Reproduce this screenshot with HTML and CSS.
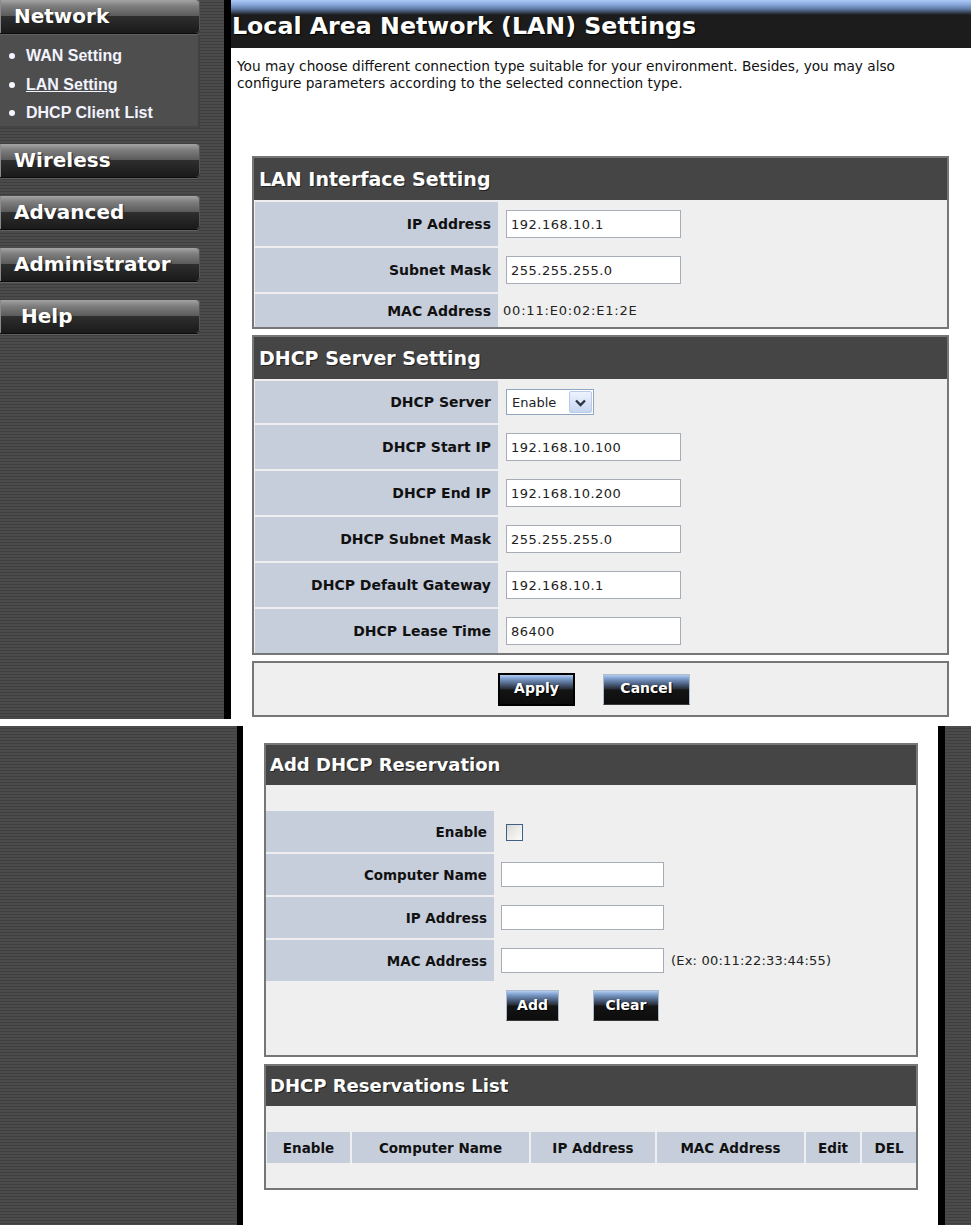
FILE: index.html
```html
<!DOCTYPE html>
<html lang="en">
<head>
<meta charset="utf-8">
<title>Local Area Network (LAN) Settings</title>
<link rel="stylesheet" href="styles.css">
</head>
<body>
<div class="shot shot-top">
  <aside class="side">
    <div class="nav-btn">Network</div>
    <ul class="submenu">
      <li><a>WAN Setting</a></li>
      <li><a class="current">LAN Setting</a></li>
      <li><a>DHCP Client List</a></li>
    </ul>
    <div class="nav-btn">Wireless</div>
    <div class="nav-btn">Advanced</div>
    <div class="nav-btn">Administrator</div>
    <div class="nav-btn help">Help</div>
  </aside>
  <div class="divider"></div>
  <main class="main">
    <header class="page-head"><h1>Local Area Network (LAN) Settings</h1></header>
    <p class="intro">You may choose different connection type suitable for your environment. Besides, you may also<br>configure parameters according to the selected connection type.</p>

    <section class="box box-lan">
      <h2 class="box-title">LAN Interface Setting</h2>
      <div class="form">
        <div class="lbl">IP Address</div>
        <div class="val"><input class="field" type="text" value="192.168.10.1"></div>
        <div class="lbl">Subnet Mask</div>
        <div class="val"><input class="field" type="text" value="255.255.255.0"></div>
        <div class="lbl">MAC Address</div>
        <div class="val"><span class="mac">00:11:E0:02:E1:2E</span></div>
      </div>
    </section>

    <section class="box box-dhcp">
      <h2 class="box-title">DHCP Server Setting</h2>
      <div class="form">
        <div class="lbl">DHCP Server</div>
        <div class="val val-select">
          <div class="select"><span class="select-text">Enable</span><span class="select-btn"><svg width="13" height="9" viewBox="0 0 13 9"><path d="M2 2.5 L6.5 7 L11 2.5" fill="none" stroke="#2b3548" stroke-width="2.4"/></svg></span></div>
        </div>
        <div class="lbl">DHCP Start IP</div>
        <div class="val"><input class="field" type="text" value="192.168.10.100"></div>
        <div class="lbl">DHCP End IP</div>
        <div class="val"><input class="field" type="text" value="192.168.10.200"></div>
        <div class="lbl">DHCP Subnet Mask</div>
        <div class="val"><input class="field" type="text" value="255.255.255.0"></div>
        <div class="lbl">DHCP Default Gateway</div>
        <div class="val"><input class="field" type="text" value="192.168.10.1"></div>
        <div class="lbl">DHCP Lease Time</div>
        <div class="val"><input class="field" type="text" value="86400"></div>
      </div>
    </section>

    <section class="box box-actions">
      <button class="btn btn-apply">Apply</button>
      <button class="btn btn-cancel">Cancel</button>
    </section>
  </main>
</div>

<div class="shot-gap"></div>

<div class="shot shot-bottom">
  <div class="stripes"></div>
  <div class="divider"></div>
  <main class="bmain">
    <section class="box2">
      <h2 class="box-title small">Add DHCP Reservation</h2>
      <div class="spacer"></div>
      <div class="form2">
        <div class="lbl lbl2">Enable</div>
        <div class="val2"><span class="check"></span></div>
        <div class="lbl lbl2">Computer Name</div>
        <div class="val2"><input class="field field2" type="text" value=""></div>
        <div class="lbl lbl2">IP Address</div>
        <div class="val2"><input class="field field2" type="text" value=""></div>
        <div class="lbl lbl2">MAC Address</div>
        <div class="val2"><input class="field field2" type="text" value=""><span class="hint">(Ex: 00:11:22:33:44:55)</span></div>
        <div class="btn-row">
          <button class="btn btn-add">Add</button>
          <button class="btn btn-clear">Clear</button>
        </div>
      </div>
    </section>

    <section class="box2 box-list">
      <h2 class="box-title small">DHCP Reservations List</h2>
      <div class="spacer"></div>
      <div class="list-head">
        <div class="th">Enable</div>
        <div class="th">Computer Name</div>
        <div class="th">IP Address</div>
        <div class="th">MAC Address</div>
        <div class="th">Edit</div>
        <div class="th">DEL</div>
      </div>
      <div class="list-foot"></div>
    </section>
  </main>
  <div class="divider"></div>
  <div class="stripes"></div>
</div>
</body>
</html>
```

FILE: styles.css
```css
html, body {
  margin: 0;
  padding: 0;
  background: #fff;
}
body {
  width: 971px;
  font-family: "DejaVu Sans", "Liberation Sans", sans-serif;
  color: #111;
}

/* ---------- top screenshot ---------- */
.shot-top {
  display: grid;
  grid-template-columns: 224px 7px 740px;
  height: 719px;
}
.side,
.stripes {
  background: repeating-linear-gradient(to bottom, #4b4b4b 0 2px, #3e3e3e 2px 3px);
}
.side {
  display: flex;
  flex-direction: column;
  align-items: flex-start;
}
.divider {
  background: #000;
}

.nav-btn {
  box-sizing: border-box;
  width: 200px;
  height: 33px;
  margin-bottom: 19px;
  padding-left: 14px;
  border-radius: 0 4px 4px 0;
  background: linear-gradient(to bottom, #a4a4a4 0, #7e7e7e 18%, #5c5c5c 47%, #2e2e2e 50%, #222 80%, #1a1a1a 100%);
  box-shadow: inset 1px 0 0 #8a8a8a, inset -1px 0 0 #555, 0 1px 0 #0c0c0c, 0 2px 0 #606060;
  color: #fff;
  font: bold 20px/33px "DejaVu Sans", sans-serif;
  text-shadow: 1px 1px 1px #222;
  white-space: nowrap;
}
.nav-btn.help {
  padding-left: 21px;
}

.submenu {
  box-sizing: border-box;
  width: 200px;
  height: 93px;
  margin: -17px 0 16px;
  padding: 7px 0 0 0;
  list-style: none;
  background: #4e4e4e;
  box-shadow: inset -2px 0 0 #404040, inset 0 -2px 0 #444;
}
.submenu li {
  position: relative;
  height: 28.5px;
  padding-left: 26px;
  font: bold 16px/28px "Liberation Sans", Arial, sans-serif;
}
.submenu li::before {
  content: "";
  position: absolute;
  left: 9px;
  top: 11px;
  width: 6px;
  height: 6px;
  border-radius: 50%;
  background: #f4f6ff;
}
.submenu a {
  color: #f2f4ff;
  text-decoration: none;
}
.submenu a.current {
  text-decoration: underline;
}

.main {
  background: #fff;
  display: flex;
  flex-direction: column;
}
.page-head {
  height: 48px;
  box-sizing: border-box;
  padding: 4px 0 0 1px;
  display: flex;
  align-items: center;
  background: linear-gradient(to bottom, #abcaf6 0, #8eaee0 4px, #5f7aa6 9px, #333b48 13px, #1c1c1c 15px, #1c1c1c 100%);
}
.page-head h1 {
  margin: 0;
  color: #fff;
  font: bold 23.7px/28px "DejaVu Sans", sans-serif;
  text-shadow: 1px 1px 1px #000;
}
.intro {
  margin: 10px 0 0;
  padding: 0 6px;
  font: 13.7px/17px "DejaVu Sans", sans-serif;
  color: #111;
}

.box {
  margin: 0 22px 0 21px;
  border: 2px solid #767676;
  background: #efefef;
}
.box-lan {
  margin-top: 64px;
}
.box-dhcp {
  margin-top: 6px;
}
.box-title {
  margin: 0;
  height: 42px;
  padding-left: 5px;
  background: #454545;
  color: #fff;
  font: bold 19px/42px "DejaVu Sans", sans-serif;
  text-shadow: 1px 1px 0 #222;
}
.form {
  display: grid;
  grid-template-columns: 243px 1fr;
  row-gap: 2px;
  padding: 2px 0 0 1px;
}
.lbl {
  display: flex;
  align-items: center;
  justify-content: flex-end;
  padding-right: 7px;
  background: #c7cedb;
  font: bold 14px "DejaVu Sans", sans-serif;
  color: #111;
  white-space: nowrap;
}
.val {
  display: flex;
  align-items: center;
  padding: 8px 0 8px 8px;
  min-height: 17px;
}
.mac {
  font: 13px/17px "DejaVu Sans", sans-serif;
  letter-spacing: 0.8px;
  color: #222;
  margin-left: -3px;
}
.field {
  box-sizing: border-box;
  width: 175px;
  height: 28px;
  margin: 0;
  padding: 0 4px;
  border: 1px solid #a6adb6;
  background: #fff;
  font: 13px "DejaVu Sans", sans-serif;
  letter-spacing: 0.5px;
  color: #222;
  outline: none;
}

.select {
  box-sizing: border-box;
  display: flex;
  align-items: center;
  justify-content: space-between;
  width: 88px;
  height: 26px;
  padding: 0 1px 0 5px;
  border: 1px solid #8fa6bf;
  background: #fff;
}
.select-text {
  font: 13px "DejaVu Sans", sans-serif;
  color: #222;
}
.select-btn {
  box-sizing: border-box;
  display: flex;
  align-items: center;
  justify-content: center;
  width: 23px;
  height: 22px;
  border: 1px solid #b9c9e6;
  border-radius: 2px;
  background: linear-gradient(to bottom, #eef3fd, #c7d6f2);
}

.box-actions {
  box-sizing: border-box;
  height: 56px;
  margin-top: 6px;
  display: flex;
  align-items: center;
  justify-content: center;
  gap: 28px;
  padding-right: 13px;
}

.btn {
  box-sizing: border-box;
  margin: 0;
  padding: 0 0 2px;
  color: #fff;
  font: bold 14px "DejaVu Sans", sans-serif;
  text-shadow: 1px 1px 0 #000;
  background: linear-gradient(to bottom, #b3cdf2 0, #7f9fce 12%, #4a5e7c 32%, #2a2f38 47%, #141414 52%, #0d0d0d 100%);
  cursor: pointer;
}
.btn-apply {
  width: 77px;
  height: 33px;
  border: 2px solid #000;
}
.btn-cancel {
  width: 87px;
  height: 31px;
  border: 1px solid #aebccc;
  border-bottom-color: #3a3a3a;
}

/* ---------- gap between shots ---------- */
.shot-gap {
  height: 7px;
}

/* ---------- bottom screenshot ---------- */
.shot-bottom {
  display: grid;
  grid-template-columns: 237px 6px 695px 7px 26px;
  height: 499px;
}
.bmain {
  background: #fff;
  padding: 17px 20px 0 21px;
}
.box2 {
  border: 2px solid #767676;
  background: #efefef;
}
.box-title.small {
  height: 40px;
  font-size: 18px;
  line-height: 40px;
  padding-left: 4px;
}
.spacer {
  height: 26px;
}
.form2 {
  display: grid;
  grid-template-columns: 228px 1fr;
  grid-auto-rows: 41px;
  row-gap: 2px;
  padding-bottom: 31px;
}
.lbl2 {
  font-size: 13.5px;
  padding-right: 7px;
}
.val2 {
  display: flex;
  align-items: center;
  padding-left: 7px;
}
.field2 {
  width: 163px;
  height: 25px;
}
.hint {
  margin-left: 7px;
  font: 13px "DejaVu Sans", sans-serif;
  letter-spacing: 0.2px;
  color: #222;
}
.check {
  box-sizing: border-box;
  width: 17px;
  height: 17px;
  margin-left: 5px;
  margin-top: 1px;
  border: 1px solid #3e5f86;
  background: linear-gradient(135deg, #d8d8d2 0, #ececea 50%, #fbfbfb 100%);
}
.btn-row {
  grid-column: 2;
  display: flex;
  align-items: flex-start;
  gap: 34px;
  padding: 7px 0 0 12px;
}
.btn-add {
  width: 53px;
  height: 31px;
  border: 1px solid #aebccc;
  border-bottom-color: #3a3a3a;
}
.btn-clear {
  width: 66px;
  height: 31px;
  border: 1px solid #aebccc;
  border-bottom-color: #3a3a3a;
}

.box-list {
  margin-top: 7px;
}
.list-head {
  display: grid;
  grid-template-columns: 83px 177px 124px 147px 54px 1fr;
  column-gap: 2px;
  height: 31px;
  padding: 0 0 0 1px;
}
.th {
  display: flex;
  align-items: center;
  justify-content: center;
  background: #c7cedb;
  font: bold 13.5px "DejaVu Sans", sans-serif;
  color: #111;
  white-space: nowrap;
}
.list-foot {
  height: 25px;
}
```
